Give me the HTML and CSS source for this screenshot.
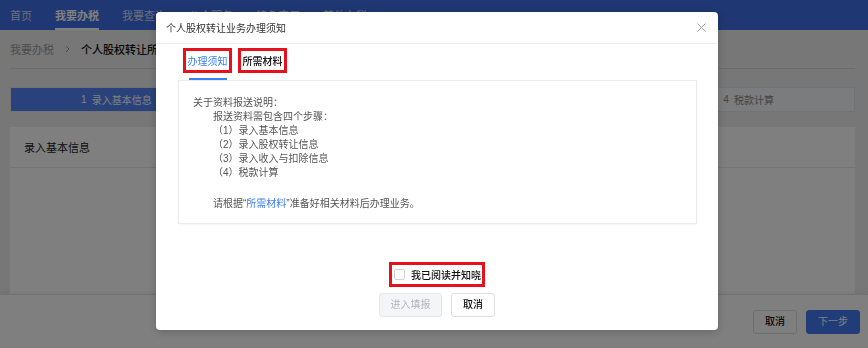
FILE: index.html
```html
<!DOCTYPE html>
<html lang="zh-CN">
<head>
<meta charset="utf-8">
<title>个人股权转让所得申报</title>
<link rel="stylesheet" href="styles.css">
</head>
<body>
<nav class="nav">
  <a class="nav-item" href="#">首页</a>
  <a class="nav-item active" href="#">我要办税</a>
  <a class="nav-item" href="#">我要查询</a>
  <a class="nav-item" href="#">公众服务</a>
  <a class="nav-item" href="#">特色应用</a>
  <a class="nav-item" href="#">其他办税</a>
</nav>
<main class="main">
  <div class="crumbs">
    <span class="crumb">我要办税</span>
    <svg class="crumb-sep" width="5" height="8" viewBox="0 0 5 8"><path d="M1 1l3 3-3 3" fill="none" stroke="#999" stroke-width="1"/></svg>
    <span class="crumb current">个人股权转让所得个人所得税申报</span>
  </div>
  <ol class="steps">
    <li class="step active"><span class="step-no">1</span>录入基本信息</li>
    <li class="step"><span class="step-no">2</span>录入股权转让信息</li>
    <li class="step"><span class="step-no">3</span>录入收入与扣除信息</li>
    <li class="step"><span class="step-no">4</span>税款计算</li>
  </ol>
  <section class="card">
    <div class="card-head">录入基本信息</div>
    <div class="card-body"></div>
  </section>
</main>
<footer class="actions">
  <button class="btn">取消</button>
  <button class="btn primary">下一步</button>
</footer>

<div class="mask"></div>
<div class="dialog">
  <div class="dialog-head">
    <span class="dialog-title">个人股权转让业务办理须知</span>
    <svg class="dialog-close" width="9" height="9" viewBox="0 0 9 9"><path d="M0.5 0.5l8 8M8.5 0.5l-8 8" stroke="#9a9a9a" stroke-width="1" fill="none"/></svg>
  </div>
  <div class="tabs">
    <div class="tab active"><span class="tab-label">办理须知</span></div>
    <div class="tab"><span class="tab-label">所需材料</span></div>
  </div>
  <div class="notice">
    <p>关于资料报送说明：</p>
    <p class="indent">报送资料需包含四个步骤：</p>
    <p class="indent">（1）录入基本信息</p>
    <p class="indent">（2）录入股权转让信息</p>
    <p class="indent">（3）录入收入与扣除信息</p>
    <p class="indent">（4）税款计算</p>
    <p class="indent tail">请根据“<a class="link" href="#">所需材料</a>”准备好相关材料后办理业务。</p>
  </div>
  <label class="agree"><span class="check"></span>我已阅读并知晓</label>
  <div class="dialog-actions">
    <button class="btn disabled">进入填报</button>
    <button class="btn">取消</button>
  </div>
</div>
</body>
</html>
```
FILE: styles.css
```css
html, body {
  margin: 0;
  height: 100%;
}
body {
  display: flex;
  flex-direction: column;
  background: #eeeeee;
  font-family: "Liberation Sans", "Noto Sans CJK SC", sans-serif;
  overflow: hidden;
}

.nav {
  height: 30px;
  flex: none;
  display: flex;
  gap: 23px;
  padding-left: 10px;
  background: #3e6ee6;
}
.nav-item {
  display: flex;
  align-items: center;
  font-size: 11px;
  color: rgba(255, 255, 255, 0.78);
  text-decoration: none;
}
.nav-item.active {
  color: #fff;
  font-weight: bold;
  box-shadow: inset 0 -2px #fff;
}

.main {
  flex: 1;
  display: flex;
  flex-direction: column;
  padding: 0 13px 0 10px;
}
.crumbs {
  height: 38px;
  border-bottom: 1px solid #d9d9d9;
  display: flex;
  align-items: center;
  gap: 11px;
  font-size: 11px;
}
.crumb { color: #999; }
.crumb.current { color: #111; font-weight: 500; }

.steps {
  list-style: none;
  margin: 18px 0 0;
  padding: 0;
  height: 25px;
  display: grid;
  grid-template-columns: repeat(4, 1fr);
  background: #f7f8fa;
  border: 1px solid #e6e6e6;
  box-sizing: border-box;
}
.step {
  display: flex;
  align-items: center;
  justify-content: center;
  font-size: 10px;
  color: #888;
}
.step.active {
  background: #5485f6;
  color: #fff;
}
.step-no { margin-right: 5px; }

.card {
  flex: 1;
  margin-top: 15px;
  background: #fff;
  display: flex;
  flex-direction: column;
}
.card-head {
  height: 40px;
  border-bottom: 1px solid #e8e8e8;
  padding-left: 14px;
  display: flex;
  align-items: center;
  font-size: 11px;
  color: #222;
}
.card-body { flex: 1; }

.actions {
  flex: none;
  height: 54px;
  box-sizing: border-box;
  padding: 15px 8px 0;
  display: flex;
  justify-content: flex-end;
  align-items: flex-start;
  gap: 9px;
  background: #fff;
  border-top: 1px solid #e2e2e2;
  box-shadow: 0 -2px 4px rgba(0, 0, 0, 0.05);
}

.btn {
  height: 24px;
  padding: 0 11px;
  border: 1px solid #dcdfe6;
  border-radius: 3px;
  background: #fff;
  color: #111;
  font-family: inherit;
  font-size: 10px;
  font-weight: 500;
  line-height: 22px;
}
.btn.primary {
  background: #4478f2;
  border-color: #4478f2;
  color: #fff;
  padding: 0 11px;
  font-weight: normal;
}
.btn.disabled {
  background: #f4f5f7;
  border-color: #e4e6ea;
  color: #b3b5b9;
  font-weight: normal;
  padding: 0 10.5px;
}

.mask {
  position: fixed;
  inset: 0;
  background: rgba(0, 0, 0, 0.5);
}
.dialog {
  position: fixed;
  left: 156px;
  top: 12px;
  width: 562px;
  height: 318px;
  background: #fff;
  border-radius: 4px;
  box-shadow: 0 2px 10px rgba(0, 0, 0, 0.2);
  display: flex;
  flex-direction: column;
}
.dialog-head {
  height: 31px;
  flex: none;
  border-bottom: 1px solid #eeeeee;
  display: flex;
  align-items: center;
  justify-content: space-between;
  padding: 0 12px 0 10px;
}
.dialog-title {
  font-size: 10px;
  color: #333;
}

.tabs {
  display: flex;
  gap: 6px;
  padding: 4px 0 0 27px;
}
.tab {
  display: flex;
  flex-direction: column;
  align-items: center;
}
.tab::after {
  content: "";
  width: 38px;
  height: 2px;
  margin-top: 5px;
}
.tab.active::after { background: #3d7ef6; }
.tab-label {
  box-sizing: border-box;
  width: 49px;
  height: 25px;
  border: 3px solid #e5121e;
  display: flex;
  align-items: center;
  justify-content: center;
  font-size: 10px;
  color: #111;
  font-weight: 500;
}
.tab.active .tab-label {
  color: #3d7ef6;
  font-weight: normal;
}

.notice {
  box-sizing: border-box;
  height: 144px;
  margin: 0 21px 0 22px;
  border: 1px solid #ebebeb;
  box-shadow: 0 1px 2px rgba(0, 0, 0, 0.04);
  padding: 15px 14px 0;
  font-size: 10px;
  line-height: 14px;
  color: #555;
}
.notice p { margin: 0; }
.notice .indent { padding-left: 20px; }
.notice .tail { margin-top: 17px; }
.link { color: #3d7ef6; text-decoration: none; }

.agree {
  box-sizing: border-box;
  width: 96px;
  height: 25px;
  margin: 38px auto 0;
  padding-left: 2px;
  border: 3px solid #e5121e;
  display: flex;
  align-items: center;
  gap: 6px;
  white-space: nowrap;
  font-size: 10px;
  font-weight: 500;
  color: #111;
}
.check {
  flex: none;
  width: 11px;
  height: 11px;
  box-sizing: border-box;
  border: 1px solid #cfd2d8;
  border-radius: 2px;
  background: #fff;
}

.dialog-actions {
  display: flex;
  justify-content: center;
  gap: 9px;
  margin-top: 6px;
}
```
